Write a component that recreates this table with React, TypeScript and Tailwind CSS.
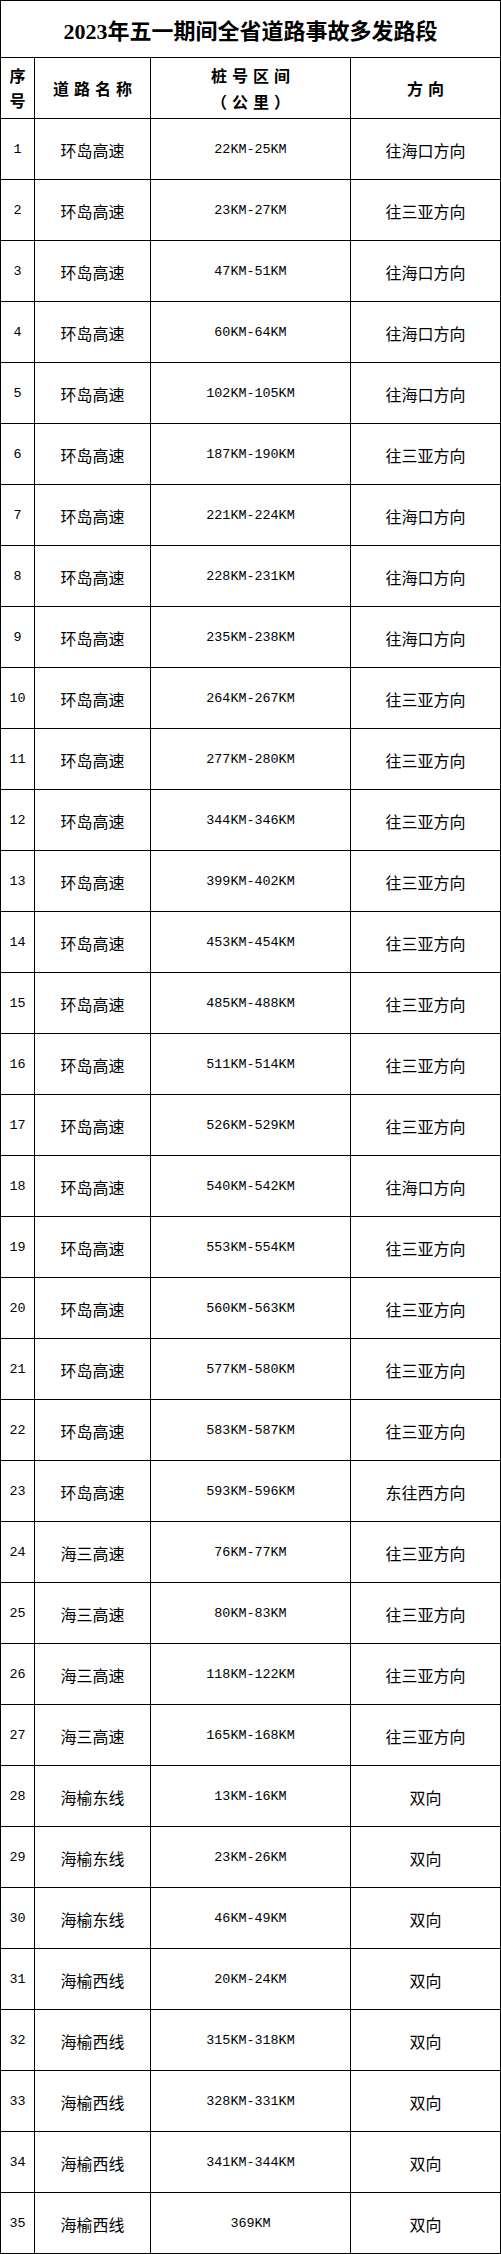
import React from "react";

type Row = [string, string, string];

const rows: Row[] = [
  ["环岛高速", "22KM-25KM", "往海口方向"],
  ["环岛高速", "23KM-27KM", "往三亚方向"],
  ["环岛高速", "47KM-51KM", "往海口方向"],
  ["环岛高速", "60KM-64KM", "往海口方向"],
  ["环岛高速", "102KM-105KM", "往海口方向"],
  ["环岛高速", "187KM-190KM", "往三亚方向"],
  ["环岛高速", "221KM-224KM", "往海口方向"],
  ["环岛高速", "228KM-231KM", "往海口方向"],
  ["环岛高速", "235KM-238KM", "往海口方向"],
  ["环岛高速", "264KM-267KM", "往三亚方向"],
  ["环岛高速", "277KM-280KM", "往三亚方向"],
  ["环岛高速", "344KM-346KM", "往三亚方向"],
  ["环岛高速", "399KM-402KM", "往三亚方向"],
  ["环岛高速", "453KM-454KM", "往三亚方向"],
  ["环岛高速", "485KM-488KM", "往三亚方向"],
  ["环岛高速", "511KM-514KM", "往三亚方向"],
  ["环岛高速", "526KM-529KM", "往三亚方向"],
  ["环岛高速", "540KM-542KM", "往海口方向"],
  ["环岛高速", "553KM-554KM", "往三亚方向"],
  ["环岛高速", "560KM-563KM", "往三亚方向"],
  ["环岛高速", "577KM-580KM", "往三亚方向"],
  ["环岛高速", "583KM-587KM", "往三亚方向"],
  ["环岛高速", "593KM-596KM", "东往西方向"],
  ["海三高速", "76KM-77KM", "往三亚方向"],
  ["海三高速", "80KM-83KM", "往三亚方向"],
  ["海三高速", "118KM-122KM", "往三亚方向"],
  ["海三高速", "165KM-168KM", "往三亚方向"],
  ["海榆东线", "13KM-16KM", "双向"],
  ["海榆东线", "23KM-26KM", "双向"],
  ["海榆东线", "46KM-49KM", "双向"],
  ["海榆西线", "20KM-24KM", "双向"],
  ["海榆西线", "315KM-318KM", "双向"],
  ["海榆西线", "328KM-331KM", "双向"],
  ["海榆西线", "341KM-344KM", "双向"],
  ["海榆西线", "369KM", "双向"],
];

const cell = "bg-white flex items-center justify-center text-black";
const mono = "font-['Liberation_Mono','Noto_Sans_CJK_SC',monospace] text-[13.4px] pt-[2px]";
const cjk = "font-['Noto_Sans_CJK_SC',sans-serif] text-[16px] leading-none pt-[2px]";
const head = "font-['Noto_Sans_CJK_SC',sans-serif] text-[16px] font-bold tracking-[5px]";

export default function App() {
  return (
    <div className="w-[501px] bg-white">
      <div className="grid grid-cols-[33px_115px_199px_149px] gap-px bg-black p-px">
        <div className={`${cell} col-span-4 h-[56px] pt-[5px] font-['Liberation_Serif','Noto_Sans_CJK_SC',serif] text-[22px] font-bold leading-none`}>
          2023年五一期间全省道路事故多发路段
        </div>

        <div className={`${cell} h-[60px] flex-col font-['Noto_Sans_CJK_SC',sans-serif] text-[16px] font-bold leading-[25px]`}>
          <span>序</span>
          <span>号</span>
        </div>
        <div className={`${cell} h-[60px] ${head}`}>
          <span className="-mr-[5px] pl-[0px]">道路名称</span>
        </div>
        <div className={`${cell} h-[60px] flex-col ${head} leading-[26px]`}>
          <span className="-mr-[5px]">桩号区间</span>
          <span className="-mr-[5px]">（公里）</span>
        </div>
        <div className={`${cell} h-[60px] ${head}`}>
          <span className="-mr-[5px]">方向</span>
        </div>

        {rows.map((r, i) => (
          <React.Fragment key={i}>
            <div className={`${cell} h-[60px] ${mono}`}>{i + 1}</div>
            <div className={`${cell} h-[60px] ${cjk}`}>{r[0]}</div>
            <div className={`${cell} h-[60px] ${mono}`}>{r[1]}</div>
            <div className={`${cell} h-[60px] ${cjk}`}>{r[2]}</div>
          </React.Fragment>
        ))}
      </div>
    </div>
  );
}
